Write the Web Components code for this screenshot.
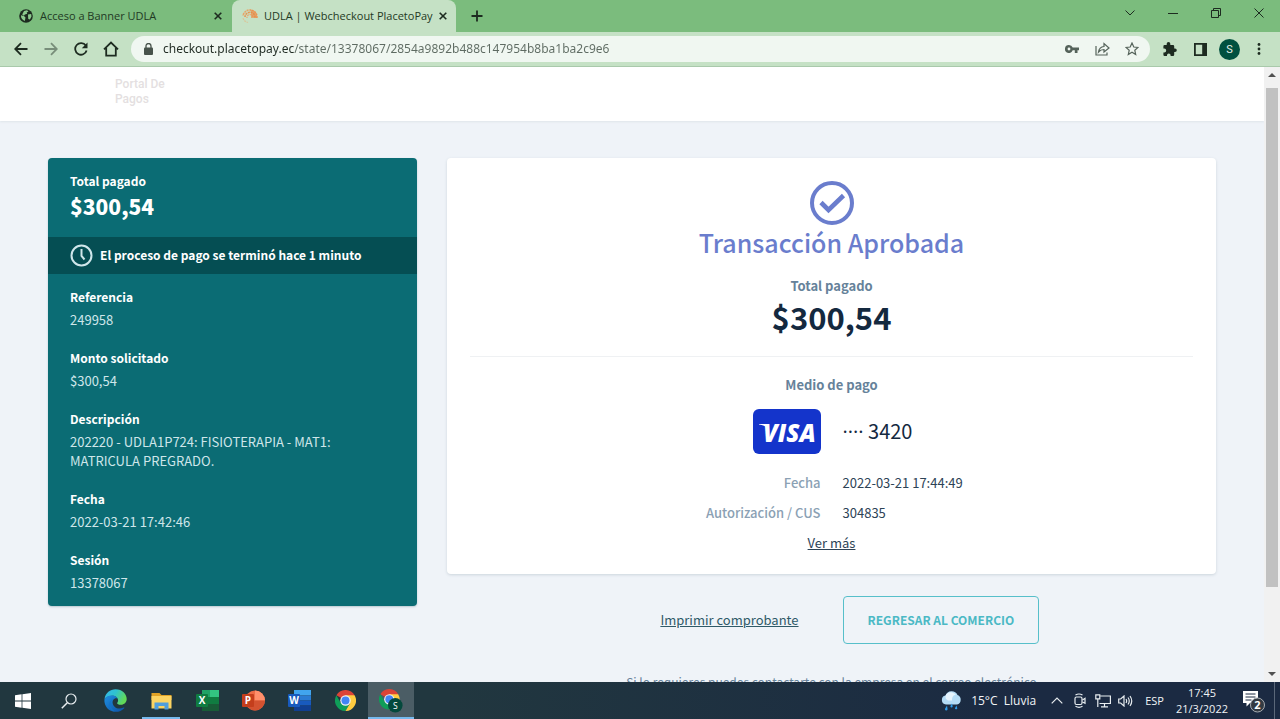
<!DOCTYPE html>
<html lang="es">
<head>
<meta charset="utf-8">
<meta name="viewport" content="width=device-width, initial-scale=1">
<title>UDLA | Webcheckout PlacetoPay</title>
<style>
  body {
    margin: 0;
    font-family: "Noto Sans CJK SC", "Open Sans", sans-serif;
  }
</style>
</head>
<body>

<desktop-screen>
  <browser-tabs slot="tabs">
    <browser-tab label="Acceso a Banner UDLA">
      <svg slot="icon" width="14" height="14" viewBox="0 0 14 14"><circle cx="7" cy="7" r="6.8" fill="#1d2b20"/><path d="M2 6.2l3 .9 1.500 1.500-.7 3.400C3.400 11 1.700 9 2 6.200zM5 2l3-.7 1.500 1.200-1.800 1 .5 1.300-2.300.7-1 1.300L3.200 5.500zM9 5.500l3.200-.5.3 2.500-1.600 3-1.600-.6-.2-2z" fill="#8cc98d"/></svg>
    </browser-tab>
    <browser-tab label="UDLA | Webcheckout PlacetoPay" active>
      <svg slot="icon" width="16" height="16" viewBox="0 0 16 16" fill="none" stroke-dasharray="2 .7"><path d="M15 10A7 7 0 0 0 1 8" stroke="#e9a468" stroke-width="1.600"/><path d="M13 9.500A5 5 0 0 0 3 9" stroke="#e79350" stroke-width="1.600"/><path d="M11 9A3 3 0 0 0 5 10" stroke="#e5ad79" stroke-width="1.400"/><path d="M8 1.500A7 7 0 0 1 15 10H9V4z" fill="#ea8a45" fill-opacity=".65"/><path d="M1 10c1 3 3 4 5 4.500" stroke="#d9c79c" stroke-width="1.200"/></svg>
    </browser-tab>
  </browser-tabs>
  <browser-toolbar slot="toolbar"></browser-toolbar>

  <site-header slot="page"></site-header>
  <checkout-layout slot="page">
    <payment-summary slot="side" amount="$300,54" notice="El proceso de pago se terminó hace 1 minuto">
      <summary-item label="Referencia">249958</summary-item>
      <summary-item label="Monto solicitado">$300,54</summary-item>
      <summary-item label="Descripción">202220 - UDLA1P724: FISIOTERAPIA - MAT1: MATRICULA PREGRADO.</summary-item>
      <summary-item label="Fecha">2022-03-21 17:42:46</summary-item>
      <summary-item label="Sesión">13378067</summary-item>
    </payment-summary>
    <payment-result amount="$300,54">
      <span slot="title">Transacción Aprobada</span>
      <span slot="card">3420</span>
      <span slot="date">2022-03-21 17:44:49</span>
      <span slot="code">304835</span>
    </payment-result>
    <checkout-actions></checkout-actions>
  </checkout-layout>

  <task-bar slot="taskbar"></task-bar>
</desktop-screen>

<script>
function makeTemplate(html) {
  const template = document.createElement('template');
  template.innerHTML = html;
  return template;
}

class BaseElement extends HTMLElement {
  constructor() {
    super();
    this.attachShadow({ mode: 'open' });
    this.shadowRoot.appendChild(this.constructor.template.content.cloneNode(true));
  }

  // copies an attribute into the first element that matches
  fill(selector, name) {
    this.shadowRoot.querySelector(selector).textContent = this.getAttribute(name);
  }
}

/* ---------- screen ---------- */

class DesktopScreen extends BaseElement {
  static template = makeTemplate(`
<style>
  :host { display: flex; flex-direction: column; height: 100vh; overflow: hidden; }
  .view { flex: 1; min-height: 0; display: flex; border-top: 1px solid #a9c9ab; }
  .page { flex: 1; min-width: 0; overflow: hidden; background: #eff3f8; }
</style>
<slot name="tabs"></slot>
<slot name="toolbar"></slot>
<div class="view">
  <div class="page"><slot name="page"></slot></div>
  <scroll-bar></scroll-bar>
</div>
<slot name="taskbar"></slot>`);
}

class ScrollBar extends BaseElement {
  static template = makeTemplate(`
<style>
  :host { display: flex; flex-direction: column; align-items: center; width: 16px; background: #f1f1f1; }
  .track { flex: 1; width: 12px; padding: 5px 0 4px; }
  .thumb { height: 87%; background: #c1c1c1; }
  svg { display: block; padding: 4px 0; }
</style>
<svg width="8" height="8" viewBox="0 0 8 8"><path d="M0 6h8L4 2z" fill="#505050"/></svg>
<div class="track"><div class="thumb"></div></div>
<svg width="8" height="8" viewBox="0 0 8 8"><path d="M0 2h8L4 6z" fill="#505050"/></svg>`);
}

/* ---------- browser ---------- */

class BrowserTabs extends BaseElement {
  static template = makeTemplate(`
<style>
  :host { display: flex; height: 32px; background: #7bbc7d; padding-left: 8px; }
  button { border: 0; padding: 0; background: none; display: grid; place-items: center; }
  .new { width: 42px; }
  .window { margin-left: auto; display: flex; height: 26px; }
  .window button { width: 43px; }
  svg { display: block; fill: none; stroke: #1d2b20; }
</style>
<slot></slot>
<button class="new" aria-label="Nueva pestaña"><svg width="12" height="12" viewBox="0 0 12 12" stroke-width="1.800"><path d="M6 .5v11M.5 6h11"/></svg></button>
<div class="window">
  <button aria-label="Buscar pestañas"><svg width="10" height="10" viewBox="0 0 10 10"><path d="M.5 2.500L5 7l4.500-4.500"/></svg></button>
  <button aria-label="Minimizar"><svg width="10" height="10" viewBox="0 0 10 10"><path d="M0 5.500h10"/></svg></button>
  <button aria-label="Restaurar"><svg width="10" height="10" viewBox="0 0 10 10"><path d="M.5 2.500h7v7h-7zM2.500 2.500v-2h7v7h-2"/></svg></button>
  <button aria-label="Cerrar"><svg width="10" height="10" viewBox="0 0 10 10"><path d="M.5.5l9 9M9.500.5l-9 9"/></svg></button>
</div>`);
}

class BrowserTab extends BaseElement {
  static template = makeTemplate(`
<style>
  :host { display: flex; align-items: center; width: 224px; box-sizing: border-box; padding: 0 10px; gap: 6px; border-radius: 8px 8px 0 0; color: #1f3a24; }
  :host([active]) { background: #c5e1c5; }
  ::slotted(svg) { flex: none; width: 16px; }
  button { border: 0; padding: 0; background: none; color: inherit; text-align: left; }
  .name { flex: 1; white-space: nowrap; font: 11px/20px "Open Sans", sans-serif; }
  svg { display: block; }
</style>
<slot name="icon"></slot>
<button class="name"></button>
<button aria-label="Cerrar pestaña"><svg width="8" height="8" viewBox="0 0 8 8"><path d="M.7.7l6.600 6.600M7.300.7L.7 7.300" stroke="#1d2b20" stroke-width="1.600"/></svg></button>`);

  connectedCallback() {
    this.fill('.name', 'label');
  }
}

class BrowserToolbar extends BaseElement {
  static template = makeTemplate(`
<style>
  :host { display: flex; align-items: center; height: 34px; background: #c5e1c5; padding: 0 6px; }
  button { border: 0; padding: 0; background: none; width: 30px; height: 30px; display: grid; place-items: center; }
  svg { display: block; }
  .line { fill: none; stroke: #1d2b20; stroke-width: 1.800; }
  .field { flex: 1; display: flex; align-items: center; height: 26px; margin: 0 5px; padding: 0 3px 0 13px; border-radius: 13px; background: #f0f7f1; }
  .field .line { stroke: #55635a; stroke-width: 1.200; }
  input {
    flex: 1; min-width: 0; border: 0; outline: 0; padding: 0; margin-left: 10px;
    font: 12px/20px "Noto Sans", sans-serif;
    -webkit-text-fill-color: transparent;
    color: #1f2a22;
    background: linear-gradient(to right, #1f2a22 131px, #5e6b62 131px);
    -webkit-background-clip: text; background-clip: text;
  }
  .user { width: 21px; height: 21px; margin: 0 4px; border-radius: 50%; background: #00503f; color: #e4efe9; font: 11px/21px Roboto, sans-serif; }
</style>
<button aria-label="Atrás"><svg class="line" width="14" height="14" viewBox="0 0 14 14"><path d="M13.500 7H1.500M7 1.200L1.200 7 7 12.800"/></svg></button>
<button aria-label="Adelante"><svg class="line" width="14" height="14" viewBox="0 0 14 14" opacity=".45"><path d="M.5 7h12M7 1.200L12.800 7 7 12.800"/></svg></button>
<button aria-label="Recargar"><svg class="line" width="14" height="14" viewBox="0 0 14 14"><path d="M11.800 3.600A5.800 5.800 0 1 0 12.600 8.500"/><path d="M13.500.5v5.700H7.800z" fill="#1d2b20" stroke="none"/></svg></button>
<button aria-label="Inicio"><svg class="line" width="16" height="16" viewBox="0 0 16 16"><path d="M1 8.300L8 1.500l7 6.800M3.200 7v7.600h9.600V7"/></svg></button>
<div class="field">
  <svg width="9" height="12" viewBox="0 0 9 12"><rect y="4.500" width="9" height="7.500" rx="1" fill="#47534b"/><path d="M2 5V3a2.500 2.500 0 0 1 5 0v2" fill="none" stroke="#47534b" stroke-width="1.300"/></svg>
  <input type="text" aria-label="Dirección" value="checkout.placetopay.ec/state/13378067/2854a9892b488c147954b8ba1ba2c9e6">
  <button aria-label="Contraseñas"><svg width="14" height="8" viewBox="0 0 14 8"><path fill-rule="evenodd" d="M4 0a4 4 0 0 1 3.700 2.600H14v2.700h-1.500V8H9.800V5.300H7.700A4 4 0 1 1 4 0zm0 2.600a1.400 1.400 0 1 0 0 2.800 1.400 1.400 0 0 0 0-2.800z" fill="#55635a"/></svg></button>
  <button aria-label="Compartir"><svg class="line" width="15" height="14" viewBox="0 0 15 14"><path d="M1 4v9h11v-2.500M3.500 10C4 6.500 6 4.700 9 4.500V1.500L14 6l-5 4V7.500C6.500 7.500 5 8.200 3.500 10z"/></svg></button>
  <button aria-label="Marcador"><svg class="line" width="14" height="14" viewBox="0 0 14 14"><path d="M7 1l1.800 4 4.200.4-3.200 2.900.9 4.200L7 10.300l-3.700 2.200.9-4.200L1 5.400 5.200 5z"/></svg></button>
</div>
<button aria-label="Extensiones"><svg width="14" height="14" viewBox="0 0 14 14"><path d="M5.500 0a1.800 1.800 0 0 1 1.800 1.800V3H10a1.200 1.200 0 0 1 1.200 1.200v2.300h.8a1.800 1.800 0 0 1 0 3.600h-.8v2.700A1.200 1.200 0 0 1 10 14H7.600v-.8a1.800 1.800 0 0 0-3.600 0v.8H1.600a1.200 1.200 0 0 1-1.200-1.200v-2.400h.9a1.900 1.900 0 0 0 0-3.800H.4V4.200A1.200 1.200 0 0 1 1.600 3h2.100V1.800A1.800 1.800 0 0 1 5.500 0z" fill="#1d2b20"/></svg></button>
<button aria-label="Panel lateral"><svg width="13" height="13" viewBox="0 0 13 13"><path fill-rule="evenodd" d="M0 0h13v13H0zm1.800 1.800v9.400H8.200V1.800z" fill="#1d2b20"/></svg></button>
<button class="user">S</button>
<button aria-label="Menú"><svg width="4" height="12" viewBox="0 0 4 12" fill="#1d2b20"><circle cx="2" cy="1.500" r="1.400"/><circle cx="2" cy="6" r="1.400"/><circle cx="2" cy="10.500" r="1.400"/></svg></button>`);
}

/* ---------- checkout page ---------- */

class SiteHeader extends BaseElement {
  static template = makeTemplate(`
<style>
  :host { display: block; height: 44px; padding: 10px 115px 0; background: #fff; box-shadow: 0 1px 2px #dfe5ea; }
  a { display: inline-block; width: 60px; font: 500 12px/15px Roboto, sans-serif; color: #e4dfe1; text-decoration: none; }
</style>
<a href="#">Portal De Pagos</a>`);
}

class CheckoutLayout extends BaseElement {
  static template = makeTemplate(`
<style>
  :host { display: grid; grid-template-columns: 12fr 25fr; gap: 30px; align-items: start; padding: 37px 48px; }
</style>
<slot name="side"></slot>
<main><slot></slot></main>`);
}

class PaymentSummary extends BaseElement {
  static template = makeTemplate(`
<style>
  :host { display: block; border-radius: 4px; overflow: hidden; background: #0b6c74; color: #fff; box-shadow: 0 1px 2px #b9c8d0; }
  .total { padding: 13px 22px 15px; font-size: 12px; font-weight: 700; line-height: 20px; }
  .amount { font-size: 21px; line-height: 31px; font-weight: 900; }
  .notice { display: flex; align-items: center; gap: 7px; height: 37px; padding: 0 22px; background: #054e53; font-size: 12px; font-weight: 700; }
  .notice .text { line-height: 20px; padding-bottom: 2px; }
  .items { display: grid; gap: 19px; padding: 13px 22px 14px; }
</style>
<div class="total"><div>Total pagado</div><div class="amount"></div></div>
<div class="notice">
  <svg width="23" height="23" viewBox="0 0 23 23" fill="none" stroke="#cfe6ea" stroke-width="2"><circle cx="11.500" cy="11.500" r="10"/><path d="M11.500 5v7l3 3.500"/></svg>
  <span class="text"></span>
</div>
<div class="items"><slot></slot></div>`);

  connectedCallback() {
    this.fill('.amount', 'amount');
    this.fill('.text', 'notice');
  }
}

class SummaryItem extends BaseElement {
  static template = makeTemplate(`
<style>
  :host { display: block; }
  .label { font-size: 12px; line-height: 20px; font-weight: 700; margin-bottom: 3px; }
  .value { font-size: 13px; line-height: 19px; color: #cfe6ea; }
</style>
<div class="label"></div>
<div class="value"><slot></slot></div>`);

  connectedCallback() {
    this.fill('.label', 'label');
  }
}

class PaymentResult extends BaseElement {
  static template = makeTemplate(`
<style>
  :host { display: block; border-radius: 4px; background: #fff; box-shadow: 0 1px 3px #ccd5dc; padding: 23px 23px 16px; text-align: center; font-size: 13px; color: #2d4356; }
  svg { display: block; }
  .check { margin: 0 auto; }
  h1 { margin: 0 0 17px; font-size: 25px; line-height: 34px; font-weight: 500; color: #6a7dcd; }
  .caption { line-height: 20px; font-weight: 700; color: #66829a; }
  .amount { font-size: 31px; line-height: 41px; font-weight: 700; color: #14293f; }
  hr { margin: 19px 0 18px; border: 0; border-top: 1px solid #eff1f3; }
  dl { display: grid; grid-template-columns: 1fr 1fr; column-gap: 22px; margin: 14px 0 0; line-height: 30px; }
  dt { justify-self: end; font-weight: 500; color: #8ba1b4; }
  dd { margin: 0; justify-self: start; }
  .brand { margin-bottom: 14px; }
  .number { height: 45px; font-size: 20px; line-height: 44px; color: #14293f; }
  .dots { font-family: "Open Sans", sans-serif; }
  a { color: inherit; line-height: 30px; }
</style>
<svg class="check" width="44" height="44" viewBox="0 0 44 44" fill="none" stroke="#6a7dcd"><circle cx="22" cy="22" r="20" stroke-width="4"/><path d="M11 21.500l7.500 7.500L33.500 14.500" stroke-width="4.600"/></svg>
<h1><slot name="title"></slot></h1>
<div class="caption">Total pagado</div>
<div class="amount"></div>
<hr>
<div class="caption">Medio de pago</div>
<dl>
  <dt class="brand"><svg width="68" height="45" viewBox="0 0 68 45" role="img" aria-label="Visa"><rect width="68" height="45" rx="6" fill="#1434cb"/><text x="10" y="33" font-family="Open Sans, sans-serif" font-size="24" font-weight="800" font-style="italic" fill="#fff">VISA</text><path d="M6 15h8l2 5c-3-2.500-6-4-10-4.500z" fill="#fff"/></svg></dt>
  <dd class="number"><span class="dots">····</span> <slot name="card"></slot></dd>
  <dt>Fecha</dt>
  <dd><slot name="date"></slot></dd>
  <dt>Autorización / CUS</dt>
  <dd><slot name="code"></slot></dd>
</dl>
<a href="#">Ver más</a>`);

  connectedCallback() {
    this.fill('.amount', 'amount');
  }
}

class CheckoutActions extends BaseElement {
  static template = makeTemplate(`
<style>
  :host { display: block; padding-top: 22px; font-size: 13px; }
  .row { display: grid; grid-template-columns: 1fr 1fr; column-gap: 22px; align-items: center; }
  a { justify-self: end; margin-right: 22px; line-height: 20px; color: #2f5a68; }
  button { justify-self: start; height: 48px; padding: 0 24px; border: 1px solid #56bfca; border-radius: 4px; background: none; color: #4bb9c5; font: 700 12px/20px "Noto Sans CJK SC", sans-serif; }
  p { margin: 28px 0 0; text-align: center; font-size: 12px; line-height: 20px; color: #66829a; }
</style>
<div class="row">
  <a href="#">Imprimir comprobante</a>
  <button>REGRESAR AL COMERCIO</button>
</div>
<p>Si lo requieres puedes contactarte con la empresa en el correo electrónico</p>`);
}

/* ---------- task bar ---------- */

class TaskBar extends BaseElement {
  static template = makeTemplate(`
<style>
  :host { display: flex; justify-content: space-between; height: 37px; background: linear-gradient(to right, #21373f 35%, #1b2a42 80%); color: #f1f4f6; font: 12px/17px "Open Sans", sans-serif; }
  button { border: 0; padding: 0; background: none; color: inherit; font: inherit; display: grid; place-items: center; }
  svg { display: block; }
  .apps, .tray { display: flex; }
  .apps button { width: 46px; box-sizing: border-box; }
  .open { background: linear-gradient(#76b9ed, #76b9ed) center bottom / 38px 2px no-repeat; }
  .apps .current { border-bottom: 2px solid #76b9ed; padding-top: 2px; background: #4b5d65; }
  .tray { align-items: center; }
  .weather { display: flex; align-items: center; gap: 9px; margin-right: 9px; }
  .tray .small { width: 23px; height: 37px; }
  .lang { font-size: 11px; margin: 0 12px 0 8px; }
  .clock { font-size: 11px; line-height: 16px; text-align: center; }
  .notes { margin: 0 8px 0 14px; }
  .edge { width: 5px; align-self: stretch; border-left: 1px solid #5b6879; }
  .line { fill: none; stroke: #e8edf0; stroke-width: 1.200; }
  text { font-family: "Open Sans", sans-serif; font-weight: 700; fill: #fff; text-anchor: middle; }
</style>
<nav class="apps">
  <button aria-label="Inicio"><svg width="16" height="16" viewBox="0 0 16 16" fill="#fff"><path d="M0 2.200L6.600 1.300v6.300H0zM7.400 1.200L16 0v7.600H7.400zM0 8.400h6.600v6.300L0 13.800zM7.400 8.400H16V16l-8.600-1.200z"/></svg></button>
  <button aria-label="Buscar"><svg class="line" width="16" height="16" viewBox="0 0 16 16"><circle cx="10" cy="6" r="5"/><path d="M6.300 9.700L.8 15.200" stroke-width="1.500"/></svg></button>
  <button aria-label="Edge"><svg width="23" height="23" viewBox="0 0 24 24">
    <defs>
      <linearGradient id="top" x1="0" y1="0" x2="1" y2=".4"><stop stop-color="#35b6ea"/><stop offset=".5" stop-color="#2fc2d0"/><stop offset="1" stop-color="#62d957"/></linearGradient>
      <linearGradient id="low" x1="0" y1="0" x2="1" y2="1"><stop stop-color="#1f8fe0"/><stop offset="1" stop-color="#0c51a5"/></linearGradient>
    </defs>
    <path d="M.5 10.500C1.500 4 6.500.3 12 .3c7 0 11.700 5 11.700 10.200 0 3.500-2.700 6-6 6-2.700 0-4-1-4-1.700 0-.6 1-1 1-3 0-2.800-2.700-4.800-6-4.800-3.700 0-6.700 1.500-8.200 3.500z" fill="url(#top)"/>
    <path d="M.4 11C1.800 8 5 6.600 8.500 6.800c3 .2 5 1.700 5.800 3.300-3.200-1.500-6 1.600-5.200 5 .9 4 5.300 7 11.400 4.300.7-.3 1 .1.6.6A12 12 0 0 1 12 23.800C5 23.800 0 18 .4 11z" fill="url(#low)"/>
    <path d="M9.300 10.800C5.500 13.500 5.800 20.500 11.500 23.800 5 23 2.500 13.500 9.300 10.800z" fill="#1473c8"/>
  </svg></button>
  <button class="open" aria-label="Explorador de archivos"><svg width="21" height="18" viewBox="0 0 21 18"><path d="M.5 1h8l2 2h10v5H.5z" fill="#e1a326"/><path d="M.5 4h20v12.500H.5z" fill="#fcd462"/><path d="M3.500 17.500v-7h14v7h-4v-3.500h-6v3.500z" fill="#4f9edd"/></svg></button>
  <button aria-label="Excel"><svg width="23" height="21" viewBox="0 0 23 21"><path d="M6 0h8v7H6z" fill="#21a366"/><path d="M14 0h9v7h-9z" fill="#33c481"/><path d="M6 7h17v7H6z" fill="#107c41"/><path d="M6 14h17v7H6z" fill="#185c37"/><rect y="4" width="12" height="13" rx="1" fill="#107c41"/><text x="6" y="14" font-size="10">X</text></svg></button>
  <button aria-label="PowerPoint"><svg width="23" height="21" viewBox="0 0 23 21"><circle cx="13" cy="10.500" r="10" fill="#ed6c47"/><path d="M13 .5a10 10 0 0 1 10 10H13z" fill="#ff8f6b"/><path d="M3 10.500h20a10 10 0 0 1-20 0z" fill="#d35230"/><rect y="4" width="12" height="13" rx="1" fill="#c43e1c"/><text x="6" y="14" font-size="10">P</text></svg></button>
  <button aria-label="Word"><svg width="23" height="21" viewBox="0 0 23 21"><path d="M6 0h17v5.500H6z" fill="#41a5ee"/><path d="M6 5.500h17v5H6z" fill="#2b7cd3"/><path d="M6 10.500h17v5H6z" fill="#185abd"/><path d="M6 15.500h17V21H6z" fill="#103f91"/><rect y="4" width="12" height="13" rx="1" fill="#185abd"/><text x="6" y="14" font-size="10">W</text></svg></button>
  <button aria-label="Chrome"><svg width="21" height="21" viewBox="0 0 24 24"><path d="M12 12L1.600 6A12 12 0 0 1 22.400 6z" fill="#db4437"/><path d="M1.600 6A12 12 0 0 0 12 24l5.200-9H6.800z" fill="#0f9d58"/><path d="M22.400 6H12l5.200 9L12 24A12 12 0 0 0 22.400 6z" fill="#ffcd40"/><circle cx="12" cy="12" r="6" fill="#f3f3f3"/><circle cx="12" cy="12" r="4.600" fill="#4285f4"/></svg></button>
  <button class="current" aria-label="Chrome, perfil S"><svg width="24" height="24" viewBox="0 0 28 28"><path d="M12 12L1.600 6A12 12 0 0 1 22.400 6z" fill="#db4437"/><path d="M1.600 6A12 12 0 0 0 12 24l5.200-9H6.800z" fill="#0f9d58"/><path d="M22.400 6H12l5.200 9L12 24A12 12 0 0 0 22.400 6z" fill="#ffcd40"/><circle cx="12" cy="12" r="6" fill="#f3f3f3"/><circle cx="12" cy="12" r="4.600" fill="#4285f4"/><circle cx="19" cy="19" r="8.500" fill="#04493c"/><text x="19" y="23" font-size="10" style="font-weight: 400">S</text></svg></button>
</nav>
<div class="tray">
  <button class="weather">
    <svg width="21" height="20" viewBox="0 0 21 20"><path d="M5 13.500a4.500 4.500 0 0 1-.5-8.900 6.500 6.500 0 0 1 12-.6 5 5 0 0 1-.5 9.500z" fill="#b4dcf6"/><path d="M7 9.500a4 4 0 0 1 0-7.500 6 6 0 0 1 8 2c-3 0-4 2-4 5.500z" fill="#e6f4fd"/><path d="M6 14.500l-1.800 3a1.300 1.300 0 1 0 2.300.3zM11 12.500l-1.400 2.300a1.100 1.100 0 1 0 2 .2zM15.500 14.500l-1.300 2.200a1.100 1.100 0 1 0 2 .2z" fill="#2e9bea"/></svg>
    <span>15°C&nbsp; Lluvia</span>
  </button>
  <button class="small" aria-label="Mostrar iconos ocultos"><svg class="line" width="12" height="7" viewBox="0 0 12 7"><path d="M.7 6.300L6 1l5.300 5.300"/></svg></button>
  <button class="small" aria-label="Cámara"><svg class="line" width="12" height="15" viewBox="0 0 12 15"><rect x="1" y="4" width="7" height="7.500" rx="1.500"/><path d="M8.500 7l2.500-1.700v5L8.500 9M1.500 2Q5 0 8.500 2M1.500 13.300q3.500 2 7 0"/></svg></button>
  <button class="small" aria-label="Red"><svg class="line" width="16" height="14" viewBox="0 0 16 14"><path d="M5.500 2h9.900v7.500H4.500M9.500 9.500v3M6 12.800h7M.8.8h4v4h-4zM2.800 4.800v8.200"/></svg></button>
  <button class="small" aria-label="Volumen"><svg class="line" width="15" height="12" viewBox="0 0 15 12"><path d="M.7 4h2L6 1v10L2.700 8h-2zM8 4q1.300 2 0 4M10 2.500q2.500 3.500 0 7M12 1q3.500 5 0 10"/></svg></button>
  <button class="lang">ESP</button>
  <button class="clock"><span>17:45</span><span>21/3/2022</span></button>
  <button class="notes"><svg width="24" height="24" viewBox="0 0 24 24"><path d="M1 2h15v12H8l-3.500 3.500V14H1z" fill="#fff"/><path d="M3.500 5h10M3.500 8h10M3.500 11h6" stroke="#1b2a42" stroke-width="1"/><circle cx="15.500" cy="16" r="7" fill="#333a42" stroke="#a7adb3"/><text x="15.500" y="20" font-size="11">2</text></svg></button>
  <span class="edge"></span>
</div>`);
}

customElements.define('desktop-screen', DesktopScreen);
customElements.define('scroll-bar', ScrollBar);
customElements.define('browser-tabs', BrowserTabs);
customElements.define('browser-tab', BrowserTab);
customElements.define('browser-toolbar', BrowserToolbar);
customElements.define('site-header', SiteHeader);
customElements.define('checkout-layout', CheckoutLayout);
customElements.define('payment-summary', PaymentSummary);
customElements.define('summary-item', SummaryItem);
customElements.define('payment-result', PaymentResult);
customElements.define('checkout-actions', CheckoutActions);
customElements.define('task-bar', TaskBar);
</script>
</body>
</html>
